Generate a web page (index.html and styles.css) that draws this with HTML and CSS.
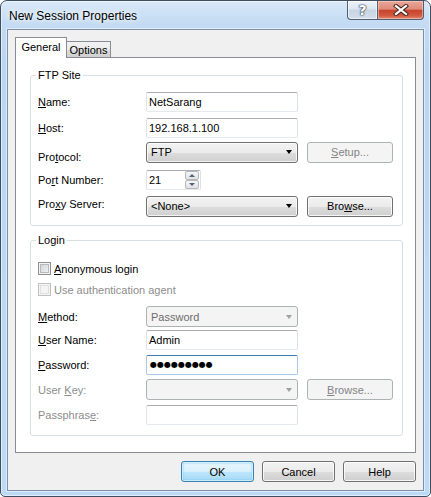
FILE: index.html
```html
<!DOCTYPE html>
<html>
<head>
<meta charset="utf-8">
<link rel="stylesheet" href="styles.css">
</head>
<body>
<div class="window">
  <div class="titlebar">
    <span class="title">New Session Properties</span>
    <div class="caption">
      <div class="cap help"><span>?</span></div>
      <div class="cap close">
        <svg width="16" height="12" viewBox="0 0 16 12">
          <path d="M3 2 L13 10 M13 2 L3 10" stroke="#4a2a22" stroke-width="4.2" stroke-linecap="square"/>
          <path d="M3 2 L13 10 M13 2 L3 10" stroke="#ffffff" stroke-width="2.2" stroke-linecap="square"/>
        </svg>
      </div>
    </div>
  </div>
  <div class="client">
    <div class="tabs">
      <div class="tab active">General</div>
      <div class="tab">Options</div>
    </div>
    <div class="panel">
      <fieldset class="group ftp">
        <legend>FTP Site</legend>
        <div class="row r1">
          <label class="lbl"><u>N</u>ame:</label>
          <div class="edit">NetSarang</div>
        </div>
        <div class="row r2">
          <label class="lbl"><u>H</u>ost:</label>
          <div class="edit">192.168.1.100</div>
        </div>
        <div class="row r3">
          <label class="lbl low">Pro<u>t</u>ocol:</label>
          <div class="combo"><span>FTP</span><i class="arrow"></i></div>
          <div class="btn disabled side"><u>S</u>etup...</div>
        </div>
        <div class="row r4">
          <label class="lbl">Po<u>r</u>t Number:</label>
          <div class="edit port">21
            <div class="spin">
              <div class="spin-btn"><i class="up"></i></div>
              <div class="spin-btn"><i class="down"></i></div>
            </div>
          </div>
        </div>
        <div class="row r5">
          <label class="lbl high">Pro<u>x</u>y Server:</label>
          <div class="combo"><span>&lt;None&gt;</span><i class="arrow"></i></div>
          <div class="btn side">Bro<u>w</u>se...</div>
        </div>
      </fieldset>

      <fieldset class="group login">
        <legend>Login</legend>
        <div class="check-row c1">
          <span class="box"></span><span class="ctext"><u>A</u>nonymous login</span>
        </div>
        <div class="check-row c2 dis">
          <span class="box"></span><span class="ctext">Use authentication a<u>g</u>ent</span>
        </div>
        <div class="row m1">
          <label class="lbl"><u>M</u>ethod:</label>
          <div class="combo disabled"><span>Password</span><i class="arrow"></i></div>
        </div>
        <div class="row m2">
          <label class="lbl"><u>U</u>ser Name:</label>
          <div class="edit">Admin</div>
        </div>
        <div class="row m3">
          <label class="lbl"><u>P</u>assword:</label>
          <div class="edit focus dots">●●●●●●●●●</div>
        </div>
        <div class="row m4">
          <label class="lbl dis">User <u>K</u>ey:</label>
          <div class="combo disabled"><span></span><i class="arrow"></i></div>
          <div class="btn disabled side"><u>B</u>rowse...</div>
        </div>
        <div class="row m5">
          <label class="lbl dis">Passphras<u>e</u>:</label>
          <div class="edit"></div>
        </div>
      </fieldset>
    </div>
    <div class="buttons">
      <div class="btn dlg default">OK</div>
      <div class="btn dlg">Cancel</div>
      <div class="btn dlg">Help</div>
    </div>
  </div>
</div>
</body>
</html>
```
FILE: styles.css
```css
* { box-sizing: border-box; }
html, body { margin: 0; padding: 0; }
body {
  width: 431px;
  height: 497px;
  font: 11px "Liberation Sans", Arial, sans-serif;
  color: #000;
  background: #fff;
}
u { text-decoration: underline; text-underline-offset: 1px; }

.window {
  width: 431px;
  height: 497px;
  border: 1px solid #3e4d5f;
  border-radius: 7px 7px 5px 5px;
  background: linear-gradient(180deg, #d9e9f9 0, #c3dbf3 22px, #bad6f2 60px, #bcd9f6 100%);
  box-shadow: inset 0 0 0 1px rgba(255,255,255,0.55);
  display: flex;
  flex-direction: column;
  overflow: hidden;
}

.titlebar {
  height: 28px;
  display: flex;
  justify-content: space-between;
  align-items: flex-start;
  padding-left: 8px;
}
.title {
  align-self: center;
  font-size: 12px;
  color: #000;
  text-shadow: 0 0 5px #fff, 0 0 8px rgba(255,255,255,0.9);
  margin-top: 1px;
}
.caption {
  display: flex;
  margin-right: 6px;
}
.cap {
  height: 19px;
  border: 1px solid #4f6075;
  border-top: none;
  display: flex;
  align-items: center;
  justify-content: center;
}
.help {
  width: 30px;
  border-right: none;
  border-radius: 0 0 0 4px;
  background: linear-gradient(180deg, #eef3f9 0, #dce5ef 45%, #c7d4e2 50%, #d3deea 100%);
  box-shadow: inset 0 0 0 1px rgba(255,255,255,0.6);
}
.help span {
  font: bold 14px "DejaVu Sans", sans-serif;
  color: #fff;
  text-shadow: 0 0 1px #2d3e52, 0 0 1px #2d3e52, 0 0 2px #2d3e52;
  line-height: 14px;
}
.close {
  width: 47px;
  border-radius: 0 0 4px 0;
  background: linear-gradient(180deg, #e9a89a 0, #df8a78 45%, #c8442e 52%, #d2573f 80%, #e08a70 100%);
  box-shadow: inset 0 0 0 1px rgba(255,220,210,0.5);
}

.client {
  flex: 1;
  margin: 0 6px 5px;
  border: 1px solid #7d8fa4;
  background: #f0f0f0;
  padding: 7px 7px 0;
  display: flex;
  flex-direction: column;
  box-shadow: 0 0 0 1px rgba(255,255,255,0.5);
}

.tabs {
  display: flex;
  align-items: flex-end;
  height: 21px;
  margin-bottom: -1px;
  position: relative;
  z-index: 1;
}
.tab {
  border: 1px solid #898c95;
  border-bottom: none;
  text-align: center;
}
.tab.active {
  width: 52px;
  height: 21px;
  background: #fff;
  padding-top: 3px;
  line-height: 13px;
}
.tab:not(.active) {
  width: 45px;
  height: 16px;
  margin-left: -1px;
  margin-bottom: 1px;
  background: linear-gradient(180deg, #f2f2f2 0, #ebebeb 50%, #dddddd 51%, #cfcfcf 100%);
  line-height: 13px;
  padding-top: 2px;
}

.panel {
  height: 396px;
  border: 1px solid #898c95;
  background: #fff;
  padding: 0 12px 0 14px;
}

.group {
  margin: 11px 0 0;
  padding: 0 9px 9px 7px;
  border: 1px solid #d5dfe5;
  border-radius: 3px;
  min-inline-size: auto;
}
.group legend {
  padding: 0 2px;
  margin-left: -2px;
  line-height: 13px;
}
.group.login { margin-top: 8px; padding-bottom: 10px; }

.row {
  display: flex;
  align-items: center;
  height: 20px;
}
.lbl {
  width: 108px;
  flex: none;
}
.lbl.low { padding-top: 10px; }
.lbl.high { padding-bottom: 4px; }
.lbl.dis, .dis .ctext { color: #8d8d8d; }

.r1 { margin-top: 10px; }
.r2 { margin-top: 6px; }
.r3 { margin-top: 4px; }
.r4 { margin-top: 8px; }
.r5 { margin-top: 6px; }

.edit {
  width: 152px;
  height: 20px;
  border: 1px solid #abadb3;
  border-left-color: #e2e3ea;
  border-right-color: #dbdfe6;
  border-bottom-color: #e3e9ef;
  border-radius: 2px;
  background: #fff;
  padding-left: 2px;
  line-height: 18px;
  position: relative;
}
.edit.focus {
  border-color: #a9c9e8;
  border-top-color: #3d7bad;
}
.edit.dots {
  font: 8px "DejaVu Sans", sans-serif;
  letter-spacing: 0;
  line-height: 18px;
  padding-left: 3px;
}
.edit.port {
  width: 55px;
}
.spin {
  position: absolute;
  right: 1px;
  top: 0;
  width: 14px;
  height: 18px;
  display: flex;
  flex-direction: column;
  gap: 0;
}
.spin-btn {
  flex: 1;
  border: 1px solid #b5b8bd;
  border-radius: 2px;
  background: linear-gradient(180deg, #f6f6f6, #e2e2e2);
  display: flex;
  align-items: center;
  justify-content: center;
}
.spin i {
  width: 0; height: 0;
  border-left: 3px solid transparent;
  border-right: 3px solid transparent;
}
.spin i.up { border-bottom: 3px solid #4d6185; }
.spin i.down { border-top: 3px solid #4d6185; }

.combo {
  width: 152px;
  height: 21px;
  border: 1px solid #707070;
  border-radius: 3px;
  background: linear-gradient(180deg, #f2f2f2 0, #ebebeb 50%, #dddddd 51%, #cfcfcf 100%);
  box-shadow: inset 0 0 0 1px rgba(255,255,255,0.75);
  display: flex;
  align-items: center;
  justify-content: space-between;
  padding: 0 5px 0 4px;
}
.arrow {
  width: 0; height: 0;
  border-left: 3.5px solid transparent;
  border-right: 3.5px solid transparent;
  border-top: 4px solid #000;
}
.combo.disabled {
  border-color: #adb2b5;
  background: #f4f4f4;
  box-shadow: none;
  color: #6d6d6d;
}
.combo.disabled .arrow { border-top-color: #a0a0a0; }

.btn {
  height: 21px;
  border: 1px solid #707070;
  border-radius: 3px;
  background: linear-gradient(180deg, #f2f2f2 0, #ebebeb 50%, #dddddd 51%, #cfcfcf 100%);
  box-shadow: inset 0 0 0 1px rgba(255,255,255,0.8);
  display: flex;
  align-items: center;
  justify-content: center;
}
.btn.side {
  width: 86px;
  margin-left: 9px;
}
.btn.disabled {
  border-color: #adb2b5;
  background: #f4f4f4;
  box-shadow: none;
  color: #838383;
}

.check-row {
  display: flex;
  align-items: center;
  height: 13px;
}
.c1 { margin-top: 15px; }
.c2 { margin-top: 8px; }
.box {
  width: 13px;
  height: 13px;
  border: 1px solid #8e8f8f;
  background: #f4f4f4;
  box-shadow: inset 0 0 0 1px #f4f4f4, inset 0 0 0 2px #b7b9bc;
  margin-right: 3px;
  flex: none;
  background-image: linear-gradient(135deg, #cbcfd5, #f6f6f6);
}
.dis .box {
  border-color: #c1c1c1;
  background: #f4f4f4;
  box-shadow: inset 0 0 0 1px #f4f4f4, inset 0 0 0 2px #e0e0e0;
}

.m1 { margin-top: 10px; height: 21px; }
.m2 { margin-top: 3px; }
.m3 { margin-top: 5px; }
.m4 { margin-top: 4px; height: 21px; }
.m5 { margin-top: 5px; }

.buttons {
  display: flex;
  justify-content: flex-end;
  gap: 8px;
  margin-top: 8px;
}
.btn.dlg { width: 73px; }
.btn.default {
  border-color: #3c7fb1;
  background: linear-gradient(180deg, #eaf6fd 0, #d9f0fc 50%, #bee6fd 51%, #a7d9f5 100%);
  box-shadow: inset 0 0 0 1px rgba(255,255,255,0.6), inset 0 0 2px 1px #6dcaf6;
}
```
